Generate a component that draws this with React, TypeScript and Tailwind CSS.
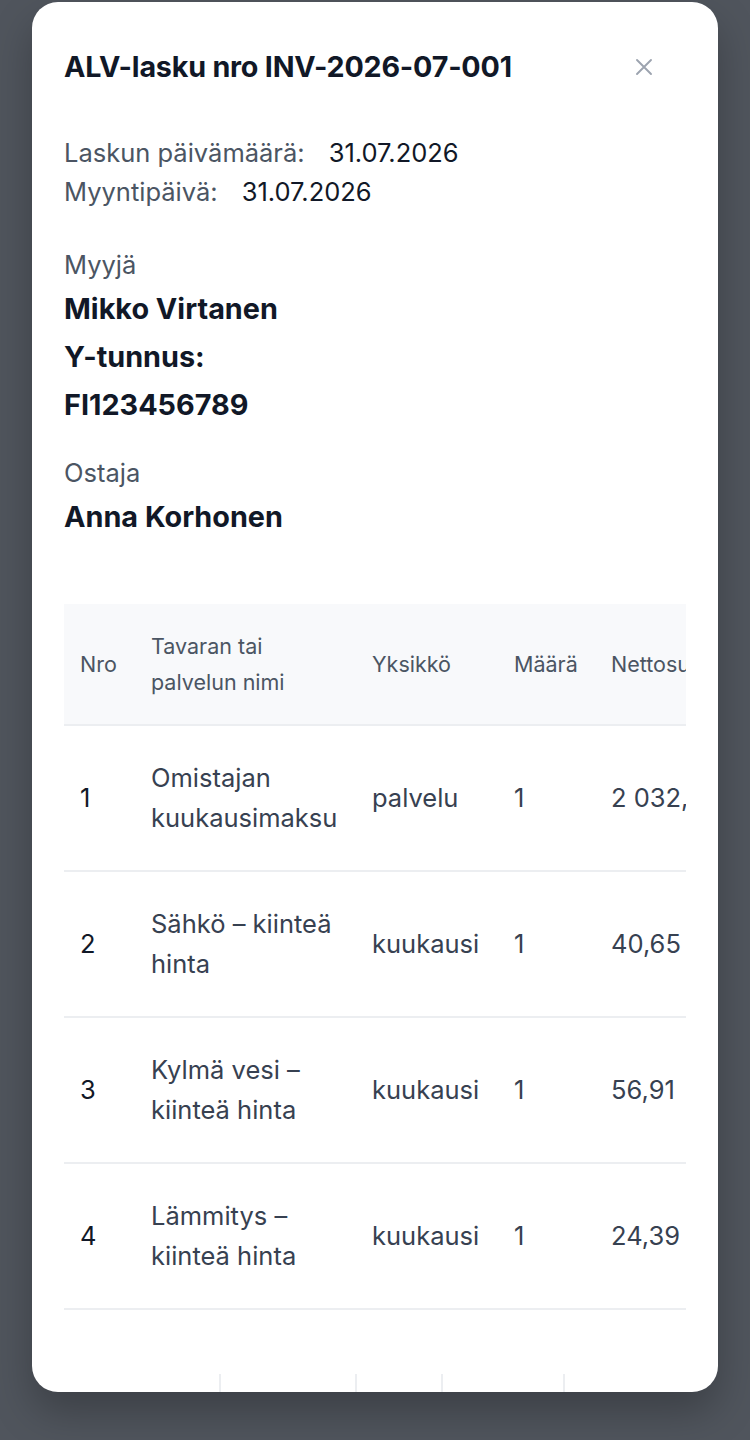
import React from "react";

const rows = [
  { nro: "1", name: ["Omistajan", "kuukausimaksu"], unit: "palvelu", qty: "1", net: "2 032,52" },
  { nro: "2", name: ["Sähkö – kiinteä", "hinta"], unit: "kuukausi", qty: "1", net: "40,65" },
  { nro: "3", name: ["Kylmä vesi –", "kiinteä hinta"], unit: "kuukausi", qty: "1", net: "56,91" },
  { nro: "4", name: ["Lämmitys –", "kiinteä hinta"], unit: "kuukausi", qty: "1", net: "24,39" },
];

function CloseIcon() {
  return (
    <svg width="18" height="18" viewBox="0 0 18 18" fill="none" stroke="currentColor" strokeWidth="1.9" strokeLinecap="round">
      <path d="M2 2L16 16M16 2L2 16" />
    </svg>
  );
}

export default function App() {
  return (
    <div
      className="w-[750px] h-[1440px] bg-[#50555d] pt-[2px] px-[32px] overflow-hidden"
      style={{ fontFamily: "Inter, 'Noto Sans', sans-serif" }}
    >
      <div className="h-[1390px] bg-white rounded-[26px] overflow-hidden shadow-[0_20px_40px_rgba(0,0,0,0.25)] px-[32px]">
        {/* header */}
        <div className="flex items-center justify-between pt-[45px] pr-[33px]">
          <h2 className="text-[28.7px] leading-[40px] font-bold text-[#111827] tracking-[-0.2px]">
            ALV-lasku nro INV-2026-07-001
          </h2>
          <span className="text-[#9ca3af]">
            <CloseIcon />
          </span>
        </div>

        {/* dates */}
        <div className="mt-[46px] text-[25.5px] leading-[39px]">
          <div className="flex gap-[24px]">
            <span className="text-[#4b5563]">Laskun päivämäärä:</span>
            <span className="text-[#111827]">31.07.2026</span>
          </div>
          <div className="flex gap-[24px]">
            <span className="text-[#4b5563]">Myyntipäivä:</span>
            <span className="text-[#111827]">31.07.2026</span>
          </div>
        </div>

        {/* parties */}
        <div className="mt-[33px]">
          <div className="text-[25.5px] leading-[41px] text-[#4b5563]">Myyjä</div>
          <div className="text-[28.8px] leading-[48px] font-bold text-[#111827]">
            <div>Mikko Virtanen</div>
            <div>Y-tunnus:</div>
            <div>FI123456789</div>
          </div>
        </div>
        <div className="mt-[23px]">
          <div className="text-[25.5px] leading-[41px] text-[#4b5563]">Ostaja</div>
          <div className="text-[28.8px] leading-[48px] font-bold text-[#111827]">Anna Korhonen</div>
        </div>

        {/* items table */}
        <div className="mt-[63px] overflow-hidden">
          <table className="w-[1000px] border-collapse text-left table-fixed">
            <colgroup>
              <col className="w-[71px]" />
              <col className="w-[221px]" />
              <col className="w-[142px]" />
              <col className="w-[97px]" />
              <col className="w-[180px]" />
              <col className="w-[120px]" />
              <col className="w-[169px]" />
            </colgroup>
            <thead>
              <tr className="bg-[#f8f9fb] border-b-2 border-[#eceef1] text-[21.5px] leading-[36px] text-[#4b5563]">
                <th className="font-normal px-[16px] py-[24px] align-middle">Nro</th>
                <th className="font-normal px-[16px] py-[24px] align-middle">
                  Tavaran tai
                  <br />
                  palvelun nimi
                </th>
                <th className="font-normal px-[16px] py-[24px] align-middle">Yksikkö</th>
                <th className="font-normal px-[16px] py-[24px] align-middle">Määrä</th>
                <th className="font-normal px-[16px] py-[24px] align-middle whitespace-nowrap">Nettosumma</th>
                <th className="font-normal px-[16px] py-[24px] align-middle">ALV %</th>
                <th className="font-normal px-[16px] py-[24px] align-middle">Bruttosumma</th>
              </tr>
            </thead>
            <tbody className="text-[25.5px] leading-[40px] text-[#374151]">
              {rows.map((r) => (
                <tr key={r.nro} className="border-b-2 border-[#eceef1]">
                  <td className="px-[16px] py-[32px] text-[#111827]">{r.nro}</td>
                  <td className="px-[16px] py-[32px]">
                    {r.name[0]}
                    <br />
                    {r.name[1]}
                  </td>
                  <td className="px-[16px] py-[32px]">{r.unit}</td>
                  <td className="px-[16px] py-[32px]">{r.qty}</td>
                  <td className="px-[16px] py-[32px] whitespace-nowrap">{r.net}</td>
                  <td className="px-[16px] py-[32px]">25,5</td>
                  <td className="px-[16px] py-[32px]">—</td>
                </tr>
              ))}
            </tbody>
          </table>
        </div>

        {/* totals table (clipped) */}
        <div className="mt-[64px] flex h-[60px]">
          <div className="w-[155px]" />
          <div className="w-[136px] border-l-2 border-[#eceef1]" />
          <div className="w-[86px] border-l-2 border-[#eceef1]" />
          <div className="w-[122px] border-l-2 border-[#eceef1]" />
          <div className="flex-1 border-l-2 border-[#eceef1]" />
        </div>
      </div>
    </div>
  );
}
